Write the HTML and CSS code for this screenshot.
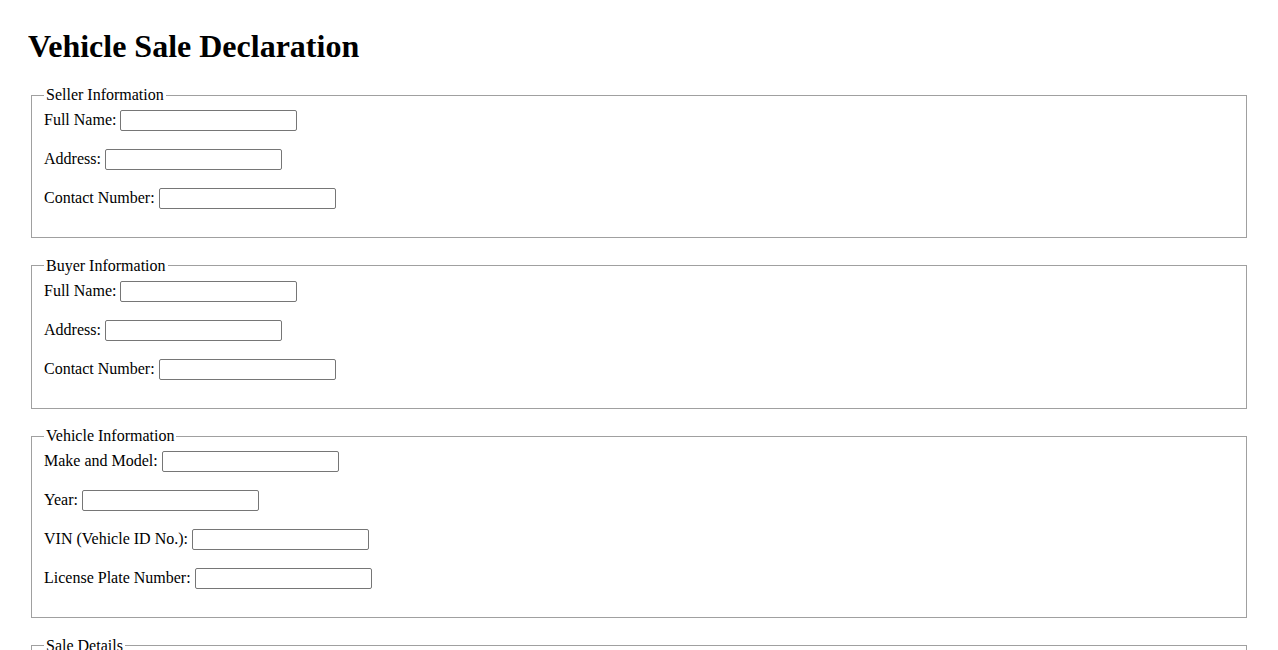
FILE: index.html
```html
<!DOCTYPE html>
<html lang="en">
<head>
<meta charset="utf-8">
<title>Vehicle Sale Declaration</title>
<link rel="stylesheet" href="styles.css">
</head>
<body>
<h1 class="title">Vehicle Sale Declaration</h1>
<form>
  <fieldset class="section">
    <legend>Seller Information</legend>
    <div class="row"><label for="sn">Full Name:</label> <input class="field" type="text" id="sn"></div>
    <div class="row"><label for="sa">Address:</label> <input class="field" type="text" id="sa"></div>
    <div class="row"><label for="sc">Contact Number:</label> <input class="field" type="text" id="sc"></div>
  </fieldset>
  <fieldset class="section">
    <legend>Buyer Information</legend>
    <div class="row"><label for="bn">Full Name:</label> <input class="field" type="text" id="bn"></div>
    <div class="row"><label for="ba">Address:</label> <input class="field" type="text" id="ba"></div>
    <div class="row"><label for="bc">Contact Number:</label> <input class="field" type="text" id="bc"></div>
  </fieldset>
  <fieldset class="section">
    <legend>Vehicle Information</legend>
    <div class="row"><label for="vm">Make and Model:</label> <input class="field" type="text" id="vm"></div>
    <div class="row"><label for="vy">Year:</label> <input class="field" type="text" id="vy"></div>
    <div class="row"><label for="vv">VIN (Vehicle ID No.):</label> <input class="field" type="text" id="vv"></div>
    <div class="row"><label for="vp">License Plate Number:</label> <input class="field" type="text" id="vp"></div>
  </fieldset>
  <fieldset class="section">
    <legend>Sale Details</legend>
    <div class="row"><label for="sd">Sale Date:</label> <input class="field" type="text" id="sd"></div>
    <div class="row"><label for="sp">Sale Price:</label> <input class="field" type="text" id="sp"></div>
  </fieldset>
</form>
</body>
</html>
```
FILE: styles.css
```css
html, body {
  background: #ffffff;
}
body {
  margin: 28px;
  font-family: "Liberation Serif", "Times New Roman", serif;
  font-size: 16px;
  color: #000;
}
.title {
  font-size: 32px;
  font-weight: bold;
  margin: 0 0 21px 0;
}
.section {
  margin: 0 3px 18.6px 3px;
  padding: 6px 12px 10px 12px;
  border: 1px solid #a0a0a0;
}
.section legend {
  padding: 0 2px;
  line-height: 18px;
}
.row {
  height: 24px;
  margin-bottom: 15px;
}
.field {
  box-sizing: border-box;
  width: 177px;
  height: 21px;
  border: 1px solid #767676;
  border-radius: 2px;
  padding: 1px 2px;
  font-family: "Liberation Sans", Arial, sans-serif;
  font-size: 13.33px;
  vertical-align: baseline;
}
```
